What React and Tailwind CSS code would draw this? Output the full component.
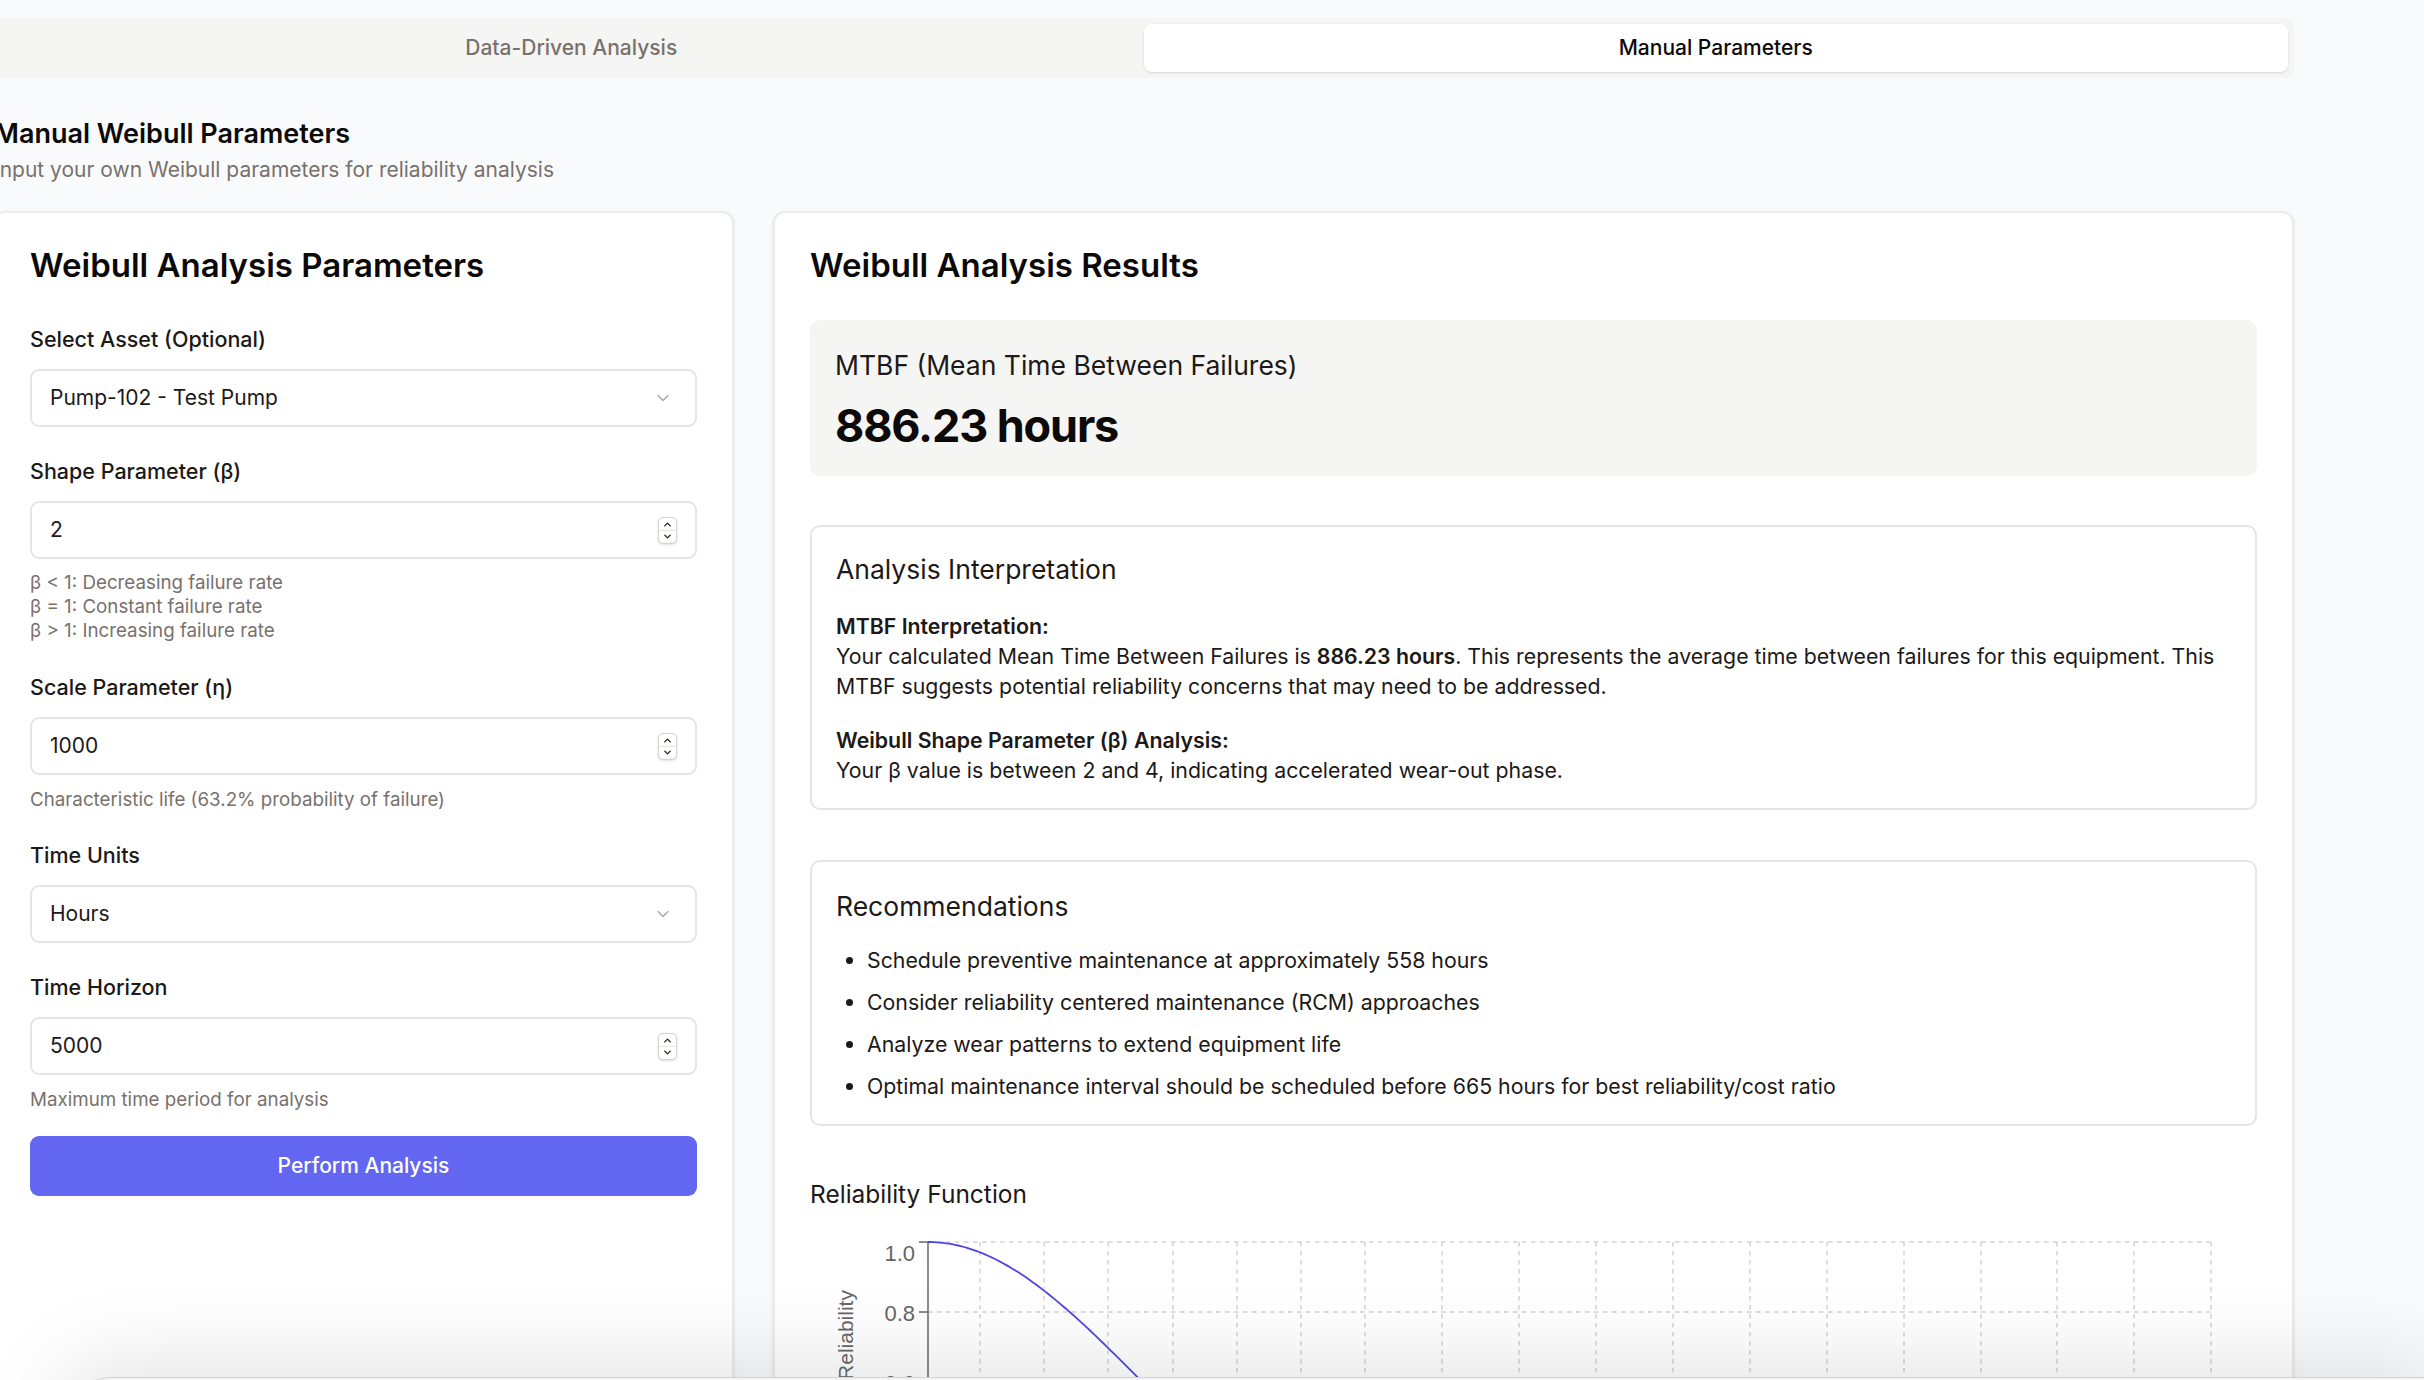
import React from "react";
import { ChevronDown, ChevronUp } from "lucide-react";

// vertical gridline positions (page px), taken from the screenshot
const GRID_X = [981, 1045, 1109, 1174, 1238, 1302, 1366, 1443, 1520, 1597, 1674, 1751, 1828, 1905, 1982, 2058, 2135, 2212];
const CHART_LEFT = 811;
const CHART_TOP = 1226;

function curvePath() {
  const pts = [];
  for (let X = 929; X <= 1420; X += 3) {
    const r = Math.exp(-Math.pow((X - 929) / 300, 2));
    const Y = 1241 + (1 - r) * 350;
    pts.push(`${(X - CHART_LEFT).toFixed(1)},${(Y - CHART_TOP).toFixed(1)}`);
  }
  return "M" + pts.join(" L");
}

function Label({ children }) {
  return <div className="text-[21.5px] font-medium leading-[30px] text-[#1c1917]">{children}</div>;
}

function Hint({ children }) {
  return <div className="text-[18.75px] leading-[24px] text-[#78716c]">{children}</div>;
}

function SelectBox({ value }) {
  return (
    <div className="mt-[15px] flex h-[58px] items-center justify-between rounded-[9px] border-2 border-[#e7e5e4] bg-white pl-[18px] pr-[22px] text-[21px] text-[#1c1917]">
      <span>{value}</span>
      <ChevronDown size={20} strokeWidth={1.5} className="text-[#a8a29e]" />
    </div>
  );
}

function NumberBox({ value }) {
  return (
    <div className="mt-[15px] flex h-[58px] items-center justify-between rounded-[9px] border-2 border-[#e7e5e4] bg-white pl-[18px] pr-[18px] text-[21px] text-[#1c1917]">
      <span>{value}</span>
      <div className="flex h-[27px] w-[19px] flex-col items-center justify-center rounded-[5px] border border-[#d6d3d1] bg-white shadow-sm">
        <ChevronUp size={11} strokeWidth={3} className="text-[#292524]" />
        <div className="h-px w-full bg-[#e7e5e4]" />
        <ChevronDown size={11} strokeWidth={3} className="text-[#292524]" />
      </div>
    </div>
  );
}

function ReliabilityChart() {
  const ax = 929 - CHART_LEFT;
  const right = 2212 - CHART_LEFT;
  const rows = [15, 85, 155];
  return (
    <svg width="1447" height="240" className="mt-[18px] block">
      {rows.map((y) => (
        <line key={y} x1={ax} x2={right} y1={y} y2={y} stroke="#d4d4d4" strokeWidth="1.5" strokeDasharray="4.5 4.5" />
      ))}
      {GRID_X.map((X) => (
        <line key={X} x1={X - CHART_LEFT} x2={X - CHART_LEFT} y1={15} y2={240} stroke="#d4d4d4" strokeWidth="1.5" strokeDasharray="4.5 4.5" />
      ))}
      <line x1={ax} x2={ax} y1={15} y2={240} stroke="#666" strokeWidth="1.5" />
      {rows.map((y) => (
        <line key={"t" + y} x1={ax - 9} x2={ax} y1={y} y2={y} stroke="#666" strokeWidth="1.5" />
      ))}
      <g fontFamily="Liberation Sans, Arial, sans-serif" fontSize="22" fill="#666" textAnchor="end">
        <text x={105} y={26} dominantBaseline="central">1.0</text>
        <text x={105} y={86} dominantBaseline="central">0.8</text>
        <text x={105} y={156} dominantBaseline="central">0.6</text>
      </g>
      <text
        x={35}
        y={108}
        transform="rotate(-90 35 108)"
        textAnchor="middle"
        dominantBaseline="central"
        fontFamily="Liberation Sans, Arial, sans-serif"
        fontSize="21"
        fill="#666"
      >
        Reliability
      </text>
      <path d={curvePath()} fill="none" stroke="#4f46e5" strokeWidth="1.8" />
    </svg>
  );
}

export default function App() {
  return (
    <div className="relative h-[1380px] overflow-hidden bg-[#f9fafb] font-['Inter','Noto_Sans',sans-serif] text-[#0c0a09]">
      <div className="ml-[-7px] w-[2301px] pt-[18px]">
        {/* tabs */}
        <div className="grid h-[60px] grid-cols-2 rounded-[10px] bg-[#f5f5f4] p-[6px]">
          <div className="flex items-center justify-center text-[21px] font-medium text-[#78716c]">Data-Driven Analysis</div>
          <div className="flex items-center justify-center rounded-[8px] bg-white text-[21px] font-medium text-[#0c0a09] shadow-sm">
            Manual Parameters
          </div>
        </div>

        {/* header */}
        <div className="mt-[35px] pl-[1px]">
          <h1 className="text-[27px] font-semibold leading-[42px]">Manual Weibull Parameters</h1>
          <p className="text-[21px] leading-[30px] text-[#78716c]">Input your own Weibull parameters for reliability analysis</p>
        </div>

        <div className="mt-[26px] grid grid-cols-3 gap-[39px]">
          {/* parameters card */}
          <div className="rounded-[12px] border-2 border-[#ebebeb] bg-white px-[35px] pt-[32px] shadow-sm">
            <h2 className="text-[33px] font-semibold leading-[40px]">Weibull Analysis Parameters</h2>

            <div className="mt-[39px]">
              <Label>Select Asset (Optional)</Label>
              <SelectBox value="Pump-102 - Test Pump" />
            </div>

            <div className="mt-[29px]">
              <Label>Shape Parameter (β)</Label>
              <NumberBox value="2" />
              <div className="mt-[12px]">
                <Hint>β &lt; 1: Decreasing failure rate</Hint>
                <Hint>β = 1: Constant failure rate</Hint>
                <Hint>β &gt; 1: Increasing failure rate</Hint>
              </div>
            </div>

            <div className="mt-[29px]">
              <Label>Scale Parameter (η)</Label>
              <NumberBox value="1000" />
              <div className="mt-[13px]">
                <Hint>Characteristic life (63.2% probability of failure)</Hint>
              </div>
            </div>

            <div className="mt-[28px]">
              <Label>Time Units</Label>
              <SelectBox value="Hours" />
            </div>

            <div className="mt-[29px]">
              <Label>Time Horizon</Label>
              <NumberBox value="5000" />
              <div className="mt-[13px]">
                <Hint>Maximum time period for analysis</Hint>
              </div>
            </div>

            <button className="mt-[24px] flex h-[60px] w-full items-center justify-center rounded-[9px] bg-[#6366f1] text-[21px] font-medium text-white">
              Perform Analysis
            </button>
          </div>

          {/* results card */}
          <div className="col-span-2 rounded-[12px] border-2 border-[#ebebeb] bg-white px-[35px] pt-[32px] pb-[40px] shadow-sm">
            <h2 className="text-[33px] font-semibold leading-[40px]">Weibull Analysis Results</h2>

            <div className="mt-[35px] rounded-[10px] bg-[#f5f5f4] px-[25px] pt-[29px] pb-[28px]">
              <div className="text-[26.5px] leading-[33px] text-[#1c1917]">MTBF (Mean Time Between Failures)</div>
              <div className="mt-[21px] text-[45px] font-bold leading-[45px] tracking-tight">886.23 hours</div>
            </div>

            <div className="mt-[49px] rounded-[10px] border-2 border-[#e7e5e4] px-[24px] pt-[26px] pb-[23px]">
              <h3 className="text-[26.5px] leading-[33px] text-[#1c1917]">Analysis Interpretation</h3>
              <div className="mt-[25px] text-[21.3px] leading-[30px] text-[#1c1917]">
                <div className="font-semibold">MTBF Interpretation:</div>
                <p>
                  Your calculated Mean Time Between Failures is <span className="font-semibold">886.23 hours</span>. This represents the
                  average time between failures for this equipment. This MTBF suggests potential reliability concerns that may need to be
                  addressed.
                </p>
                <div className="mt-[24px] font-semibold">Weibull Shape Parameter (β) Analysis:</div>
                <p>Your β value is between 2 and 4, indicating accelerated wear-out phase.</p>
              </div>
            </div>

            <div className="mt-[50px] rounded-[10px] border-2 border-[#e7e5e4] px-[24px] pt-[28px] pb-[23px]">
              <h3 className="text-[26.5px] leading-[33px] text-[#1c1917]">Recommendations</h3>
              <ul className="mt-[22px] flex list-disc flex-col gap-[12px] pl-[31px] text-[21.3px] leading-[30px] text-[#1c1917]">
                <li>Schedule preventive maintenance at approximately 558 hours</li>
                <li>Consider reliability centered maintenance (RCM) approaches</li>
                <li>Analyze wear patterns to extend equipment life</li>
                <li>Optimal maintenance interval should be scheduled before 665 hours for best reliability/cost ratio</li>
              </ul>
            </div>

            <div className="mt-[53px] text-[24.5px] leading-[30px] text-[#1c1917]">Reliability Function</div>
            <ReliabilityChart />
          </div>
        </div>
      </div>

      {/* edge of a window sitting below the viewport */}
      <div className="absolute left-[70px] right-0 top-[1377px] h-[80px] rounded-tl-[40px] border-t border-[#d4d4d4] bg-[#f3f3f3] shadow-[0_0_90px_10px_rgba(0,0,0,0.12)]" />
    </div>
  );
}
